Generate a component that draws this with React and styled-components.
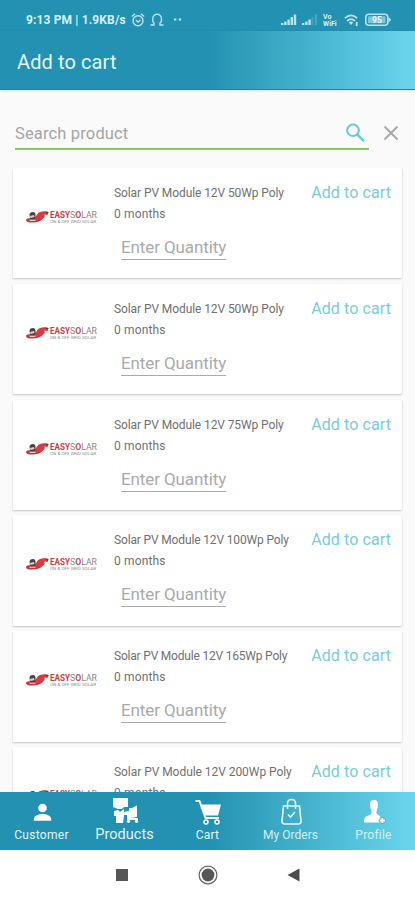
import React from 'react';
import styled, { createGlobalStyle } from 'styled-components';

const GlobalStyle = createGlobalStyle`
  * {
    box-sizing: border-box;
  }
  body {
    margin: 0;
    font-family: Roboto, 'Liberation Sans', sans-serif;
    background-color: #fff;
  }
`;

const Screen = styled.div`
  display: flex;
  flex-direction: column;
  width: 415px;
  height: 900px;
  overflow: hidden;
  background-color: #fafafa;
`;

const StatusBar = styled.div`
  display: flex;
  align-items: center;
  flex: none;
  height: 31px;
  padding: 9px 24px 0 26px;
  color: #d5f0f7;
  background-color: #2391b1;
`;
const StatusText = styled.span`
  width: 103px;
  margin-right: 2px;
  font-size: 12px;
  line-height: 16px;
  font-weight: 700;
  letter-spacing: 0.14px;
  white-space: nowrap;
`;
const StatusIcon = styled.svg`
  flex: none;
  width: ${({ w }) => w}px;
  height: 14px;
  margin-left: ${({ gap }) => gap || 0}px;
`;
const Spacer = styled.div`
  flex: 1;
`;

const AppBar = styled.header`
  display: flex;
  align-items: center;
  flex: none;
  height: 59px;
  padding: 3px 17px 0;
  background: linear-gradient(90deg, #2391b1 50%, #49b6d0 77%, #6ad5ec 100%);
  border-bottom: 1px solid #1688ad;
  box-shadow: 0 1px 3px rgba(0, 0, 0, 0.12);
`;
const Title = styled.h1`
  margin: 0;
  font-size: 20px;
  line-height: 24px;
  font-weight: 400;
  letter-spacing: 0.1px;
  color: #e4f6fa;
`;

const SearchRow = styled.div`
  display: flex;
  flex: none;
  height: 78px;
  padding: 28px 15px 0;
`;
const SearchField = styled.div`
  display: flex;
  align-items: center;
  justify-content: space-between;
  width: 354px;
  height: 32px;
  padding-right: 2px;
  border-bottom: 2px solid #83cb58;
`;
const Placeholder = styled.span`
  padding-top: 2px;
  font-size: 16.5px;
  line-height: 20px;
  letter-spacing: 0.15px;
  color: #a5a5a5;
`;
const SearchIcon = styled.svg`
  width: 22px;
  height: 22px;
`;
const CloseIcon = styled.svg`
  width: 16px;
  height: 16px;
  margin: 7px 0 0 14px;
`;

const List = styled.main`
  flex: 1;
  min-height: 0;
  padding: 0 13px;
  overflow: hidden;
`;
const Card = styled.article`
  display: flex;
  height: 110.4px;
  margin-bottom: 5.4px;
  padding: 0 11px 0 12px;
  background-color: #fff;
  border-radius: 1px;
  box-shadow: 0 1px 2px rgba(0, 0, 0, 0.22);
`;
const LogoBox = styled.svg`
  flex: none;
  width: 74px;
  height: 18px;
  margin-top: 39px;
`;
const Details = styled.div`
  flex: 1;
  padding: 15px 0 0 15px;
  white-space: nowrap;
`;
const Name = styled.div`
  font-size: 12px;
  line-height: 21px;
  letter-spacing: ${({ spacing }) => spacing}px;
  color: #707070;
`;
const Quantity = styled.div`
  width: 105px;
  height: 26px;
  margin: 9px 0 0 7px;
  font-size: 17px;
  line-height: 26px;
  letter-spacing: -0.1px;
  color: #aaa;
  border-bottom: 1px solid #aaa;
`;
const AddLink = styled.span`
  margin-top: 15px;
  font-size: 16px;
  line-height: 20px;
  letter-spacing: 0.1px;
  white-space: nowrap;
  color: #7accdc;
`;

const TabBar = styled.nav`
  display: grid;
  grid-template-columns: repeat(5, 83px);
  flex: none;
  height: 58px;
  background: linear-gradient(90deg, #2391b1 50%, #49b6d0 77%, #6ad5ec 100%);
`;
const Tab = styled.div`
  display: flex;
  flex-direction: column;
  align-items: center;
  padding-top: 5px;
  color: ${({ $soft }) => ($soft ? '#d0f1f8' : '#e2f6fb')};
`;
const TabIcon = styled.svg`
  width: 30px;
  height: 28px;
`;
const TabLabel = styled.span`
  font-size: ${({ $active }) => ($active ? 14.5 : 12)}px;
  line-height: 20px;
  letter-spacing: ${({ spacing }) => spacing || 0}px;
`;

const SystemNav = styled.footer`
  display: flex;
  justify-content: center;
  flex: none;
  height: 50px;
  padding-top: 13px;
  gap: 62px;
  background-color: #fff;
`;
const SystemIcon = styled.svg`
  width: 24px;
  height: 24px;
`;

const products = [
  { name: 'Solar PV Module 12V 50Wp Poly', spacing: -0.09 },
  { name: 'Solar PV Module 12V 50Wp Poly', spacing: -0.09 },
  { name: 'Solar PV Module 12V 75Wp Poly', spacing: -0.1 },
  { name: 'Solar PV Module 12V 100Wp Poly', spacing: -0.15 },
  { name: 'Solar PV Module 12V 165Wp Poly', spacing: -0.2 },
  { name: 'Solar PV Module 12V 200Wp Poly', spacing: -0.05 },
];

const Logo = () => (
  <LogoBox viewBox="0 0 74 18">
    <path d="M1 12.5 Q3 10.5 6 11.5 H18 Q15 16 5 15.5 Q1 15.5 1 12.5Z" fill="#c8353c" />
    <path d="M4.5 7 Q5 5 8 5 Q10.5 5 10.5 8 L11 12 H5Z" fill="#4b4244" />
    <path d="M10 13 Q11 6.5 15 5 Q19 3.5 23.5 5 L22.5 8 L19.5 7.5 Q20.5 12 15 12.5Z" fill="#d63d42" />
    <path d="M5 9 L9 8 L9.5 10 L5.5 11Z M4 12.8 H11 L10 14 H5Z" fill="#f1c5c2" />
    <path d="M19.5 4.5 L23.5 5 L22.8 7Z" fill="#554043" />
    <text x="25" y="10.8" fontSize="8.5" fontWeight="700" fill="#d13b42" textLength="20" lengthAdjust="spacingAndGlyphs">EASY</text>
    <text x="45" y="10.8" fontSize="8.5" fill="#8b8588" textLength="27" lengthAdjust="spacingAndGlyphs">
      S<tspan fill="#c14c52" fontWeight="700">O</tspan>LAR
    </text>
    <text x="25" y="15.6" fontSize="4.4" fill="#8d8d8d" textLength="46" lengthAdjust="spacingAndGlyphs">ON &amp; OFF GRID SOLAR</text>
  </LogoBox>
);

const ProductCard = ({ name, spacing }) => (
  <Card>
    <Logo />
    <Details>
      <Name spacing={spacing}>{name}</Name>
      <Name spacing={0.16}>0 months</Name>
      <Quantity>Enter Quantity</Quantity>
    </Details>
    <AddLink>Add to cart</AddLink>
  </Card>
);

const Status = () => (
  <StatusBar>
    <StatusText>9:13 PM | 1.9KB/s</StatusText>
    <StatusIcon w={14} viewBox="0 0 14 14" fill="none" stroke="#b9e3ee" strokeWidth="1.4">
      <circle cx="7" cy="7.8" r="5" />
      <path d="M0.8 3.5 L4 0.9 M13.2 3.5 L10 0.9 M4.8 7 L7 9 L9.5 7" />
    </StatusIcon>
    <StatusIcon w={14} gap={5} viewBox="0 0 14 14" fill="none" stroke="#b9e3ee" strokeWidth="1.4">
      <path d="M0.5 12 H4 V10 L2.8 8.5 V5.5 A4.2 4.2 0 0 1 11.4 5.5 V8.5 L10 10 V12 H13.6" />
    </StatusIcon>
    <StatusIcon w={12} gap={9} viewBox="0 0 12 14" fill="#b9e3ee">
      <circle cx="2.2" cy="6.5" r="1.3" />
      <circle cx="7" cy="6.5" r="1.3" />
    </StatusIcon>
    <Spacer />
    <StatusIcon w={16} viewBox="0 0 16 14" fill="#b9e3ee">
      <path d="M0 10h2.4v2H0z M3.2 8.5h2.4V12H3.2z M6.4 6.5h2.4V12H6.4z M9.6 4h2.4v8H9.6z M12.8 1.5h2.4V12h-2.4z" />
    </StatusIcon>
    <StatusIcon w={16} gap={5} viewBox="0 0 16 14" fill="#b9e3ee">
      <path d="M0 10h2.4v2H0z M3.2 8.5h2.4V12H3.2z M6.4 6.5h2.4V12H6.4z" />
      <path d="M9.6 4h1.6v8H9.6z M12.8 1.5h2.2V12h-2.2z" opacity="0.25" />
    </StatusIcon>
    <StatusIcon w={17} gap={4} viewBox="0 0 17 14" fill="#d5f0f7">
      <text x="1" y="6" fontSize="7" fontWeight="700">Vo</text>
      <text x="1" y="12.5" fontSize="7" fontWeight="700">WiFi</text>
    </StatusIcon>
    <StatusIcon w={15} gap={5} viewBox="0 0 15 14" fill="none" stroke="#b9e3ee" strokeWidth="1.7">
      <path d="M0.8 5.2 Q7 -0.4 13.2 5.2 M3 8 Q7 4.4 11 8" />
      <path d="M4.8 9.5 Q7 7.7 9.2 9.5 L7 12Z" fill="#b9e3ee" stroke="none" />
      <path d="M12.7 9 V13" strokeWidth="1.8" />
    </StatusIcon>
    <StatusIcon w={26} gap={6} viewBox="0 0 26 14">
      <rect x="0.8" y="1.3" width="22" height="11" rx="3" fill="none" stroke="#b9e3ee" strokeWidth="1.6" />
      <rect x="3" y="3.3" width="17.6" height="7" rx="1" fill="#7fc3d6" />
      <path d="M23.5 4 L26.3 6.8 L23.5 9.6Z" fill="#b9e3ee" />
      <text x="7" y="9.8" fontSize="8.5" fontWeight="700" fill="#e8f8fc">95</text>
    </StatusIcon>
  </StatusBar>
);

const App = () => {
  return (
    <>
      <GlobalStyle />
      <Screen>
        <Status />
        <AppBar>
          <Title>Add to cart</Title>
        </AppBar>
        <SearchRow>
          <SearchField>
            <Placeholder>Search product</Placeholder>
            <SearchIcon viewBox="0 0 22 22" fill="none" stroke="#65c9df" strokeWidth="2">
              <circle cx="8" cy="8.3" r="5.8" />
              <path d="M12.3 12.6 L19 19.2" strokeWidth="2.4" />
            </SearchIcon>
          </SearchField>
          <CloseIcon viewBox="0 0 16 16" stroke="#a9a9a9" strokeWidth="1.9">
            <path d="M1.5 1.5 L14.5 14.5 M14.5 1.5 L1.5 14.5" />
          </CloseIcon>
        </SearchRow>
        <List>
          {products.map((product, i) => (
            <ProductCard key={i} {...product} />
          ))}
        </List>
        <TabBar>
          <Tab>
            <TabIcon viewBox="0 0 30 28" fill="#fff">
              <circle cx="15.5" cy="11" r="4.3" />
              <path d="M6.8 23.8 V22 C6.8 18.5 12 17 15.5 17 S24.2 18.5 24.2 22 V23.8Z" />
            </TabIcon>
            <TabLabel spacing={0.28}>Customer</TabLabel>
          </Tab>
          <Tab>
            <TabIcon viewBox="0 0 30 28" fill="#fff">
              <path d="M3 1 H18 V10 H14 L12 12 H8 L3 10Z" />
              <path d="M4 14 L8 13 L10 15 L14 12 V19 L13 26 H6 V19 H4Z" />
              <path d="M13 15 L19 14 V11 H22 L27 8.5 V20 L21 21 H28 V23 H17 V18 H13Z" />
              <circle cx="18.5" cy="24.3" r="1.6" />
              <circle cx="26.5" cy="24.3" r="1.6" />
            </TabIcon>
            <TabLabel $active spacing={0.02}>Products</TabLabel>
          </Tab>
          <Tab>
            <TabIcon viewBox="0 0 30 28">
              <path d="M2.5 4 H6.5 L12.5 21 H26" fill="none" stroke="#fff" strokeWidth="2" strokeLinejoin="round" />
              <path d="M7.5 7.5 H28 L25 18.5 H11.5Z" fill="#fff" />
              <circle cx="13" cy="25" r="2" fill="none" stroke="#fff" strokeWidth="1.5" />
              <circle cx="24" cy="25" r="2" fill="none" stroke="#fff" strokeWidth="1.5" />
            </TabIcon>
            <TabLabel spacing={0.2}>Cart</TabLabel>
          </Tab>
          <Tab $soft>
            <TabIcon viewBox="0 0 30 28" fill="none" stroke="#e4f8fc" strokeWidth="1.6">
              <path d="M7.5 9 H23.5 L25 24 Q25 27 22.5 27 H8.5 Q6 27 6 24Z" />
              <path d="M11.5 12 V6.5 Q11.5 2.5 15.5 2.5 T19.5 6.5 V12" />
              <path d="M12 17.5 L14.5 20 L19 15" />
            </TabIcon>
            <TabLabel spacing={0.02}>My Orders</TabLabel>
          </Tab>
          <Tab $soft>
            <TabIcon viewBox="0 0 30 28" fill="#fff">
              <path d="M11 8 Q10.5 3 15 2.7 Q19.5 3 19 8 Q19 11 17.8 13 Q17 16 18 17 Q21 18.5 21.5 20 V25.5 H5 Q5 21 7 19.5 L12 17.3 Q13.5 15.5 12.3 13 Q11 11 11 8Z" />
              <path d="M19.8 23.5 H27 M23.4 20 V27" stroke="#50bbd4" strokeWidth="3.6" />
              <path d="M20.8 23.5 H26 M23.4 21 V26" stroke="#fff" strokeWidth="1.8" />
            </TabIcon>
            <TabLabel spacing={0.22}>Profile</TabLabel>
          </Tab>
        </TabBar>
        <SystemNav>
          <SystemIcon viewBox="0 0 24 24" fill="#565656">
            <rect x="6" y="6" width="12" height="12" />
          </SystemIcon>
          <SystemIcon viewBox="0 0 24 24">
            <circle cx="12" cy="12" r="8.9" fill="none" stroke="#666" strokeWidth="1.3" />
            <circle cx="12" cy="12" r="6.4" fill="#565656" />
          </SystemIcon>
          <SystemIcon viewBox="0 0 24 24" fill="#4d4d4d">
            <path d="M5.5 12 L17.5 5.5 V18.5Z" />
          </SystemIcon>
        </SystemNav>
      </Screen>
    </>
  );
};

export default App;
